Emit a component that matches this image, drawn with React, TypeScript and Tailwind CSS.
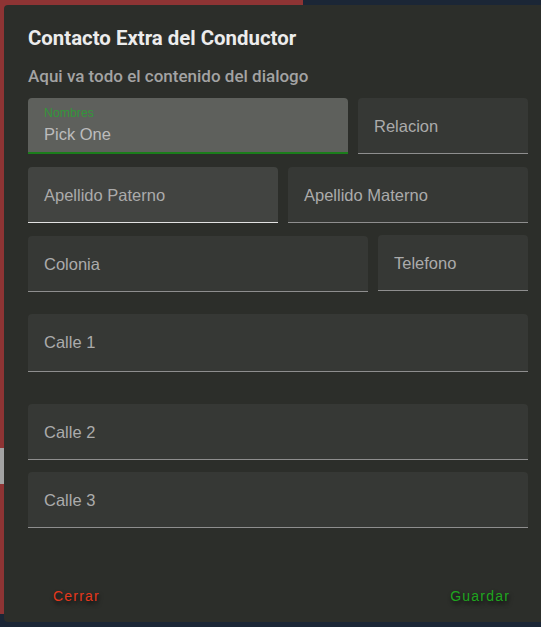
import React from "react";

function Field({
  label,
  className = "",
  bg = "bg-[#363835]",
  line = "border-b border-[#8e8e8e]",
  h = "h-[56px]",
  extra = "",
}: {
  label: string;
  className?: string;
  bg?: string;
  line?: string;
  h?: string;
  extra?: string;
}) {
  return (
    <div
      className={`${className} ${bg} ${line} ${h} ${extra} rounded-t-[4px] flex items-center pl-[16px] box-border`}
    >
      <span className="text-[16.5px] leading-[20px] text-[#ababab] font-['Liberation_Sans',Arial,sans-serif]">
        {label}
      </span>
    </div>
  );
}

export default function App() {
  return (
    <div className="relative w-[541px] h-[627px] overflow-hidden bg-[#1b2636]">
      <div className="absolute left-0 top-0 w-[303px] h-[614px] bg-[#8e3434]" />
      <div className="absolute left-0 top-[448px] w-[4px] h-[36px] bg-[#a3a3a3]" />
      <div className="absolute left-[4px] top-[5px] w-[560px] h-[617px] rounded-[4px] bg-[#2c2e2a] pl-[24px]">
        <div className="w-[500px] flex flex-col">
          <div className="pt-[17px] text-[20.4px] leading-[32px] font-bold text-[#ececec] font-['Roboto',sans-serif]">
            Contacto Extra del Conductor
          </div>
          <div className="mt-[10px] text-[17px] leading-[24px] font-medium text-[#a3a3a3] font-['Roboto',sans-serif]">
            Aqui va todo el contenido del dialogo
          </div>

          <div className="mt-[10px] flex gap-[10px]">
            <div className="w-[320px] h-[56px] rounded-t-[4px] bg-[#5e605c] border-b-2 border-[#1b7d1b] box-border pl-[16px] pt-[8px] flex flex-col font-['Liberation_Sans',Arial,sans-serif]">
              <span className="text-[12.3px] leading-[14px] text-[#34963a]">Nombres</span>
              <span className="mt-[4px] text-[16.5px] leading-[20px] text-[#bcbcbc]">Pick One</span>
            </div>
            <Field label="Relacion" className="w-[170px]" />
          </div>

          <div className="mt-[13px] flex gap-[10px]">
            <Field
              label="Apellido Paterno"
              className="w-[250px]"
              bg="bg-[#424441]"
              line="border-b border-[#e2e2e2]"
            />
            <Field label="Apellido Materno" className="w-[240px]" />
          </div>

          <div className="mt-[13px] flex gap-[10px] items-start">
            <Field label="Colonia" className="w-[340px]" />
            <Field label="Telefono" className="w-[150px]" extra="-mt-[1px]" />
          </div>

          <div className="mt-[22px]">
            <Field label="Calle 1" className="w-[500px]" h="h-[58px]" extra="pb-[2px]" />
          </div>
          <div className="mt-[32px]">
            <Field label="Calle 2" className="w-[500px]" />
          </div>
          <div className="mt-[12px]">
            <Field label="Calle 3" className="w-[500px]" />
          </div>

          <div className="mt-[58px] flex justify-between pl-[25px] pr-[18px] font-['Liberation_Sans',Arial,sans-serif] text-[14px] leading-[20px] tracking-[1.2px]">
            <span className="text-[#e5381c] [text-shadow:1px_3px_4px_rgba(0,0,0,0.75)]">Cerrar</span>
            <span className="text-[#1fa61f] [text-shadow:1px_3px_4px_rgba(0,0,0,0.75)]">Guardar</span>
          </div>
        </div>
      </div>
    </div>
  );
}
